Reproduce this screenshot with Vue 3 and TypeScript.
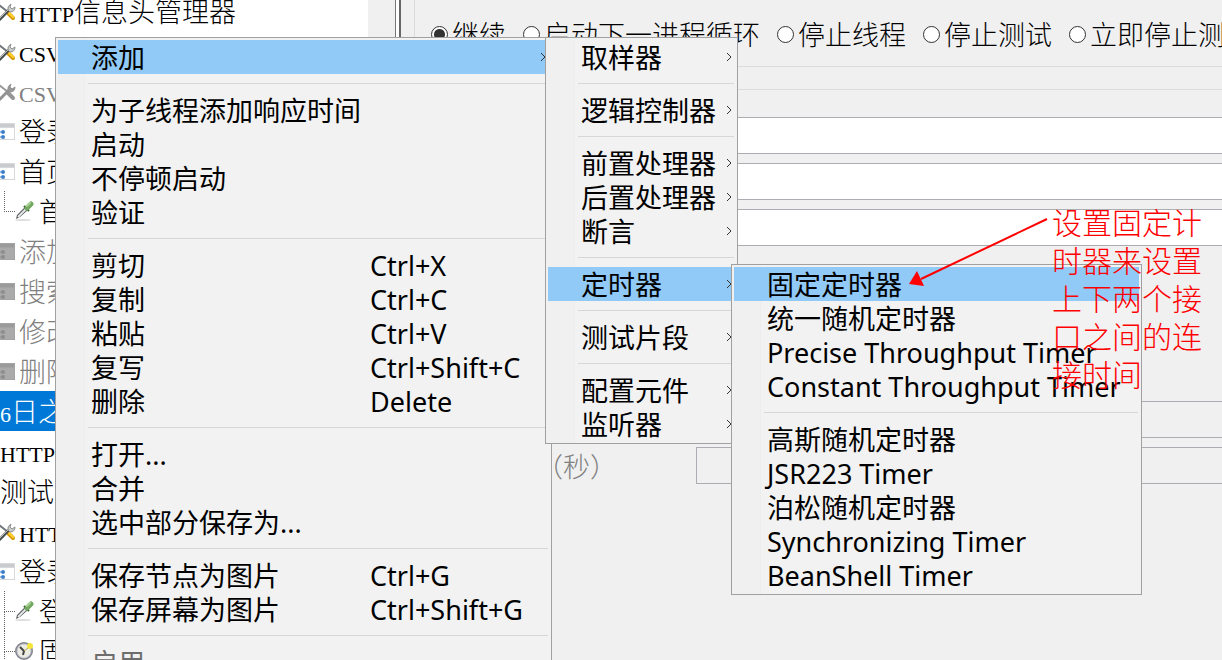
<script setup lang="ts">
type IconKind = 'tools' | 'tools-off' | 'http' | 'http-off' | 'dropper' | 'clock' | 'none'
interface TreeRow { latin?: string; text?: string; icon: IconKind; off?: boolean; child?: boolean; last?: boolean; selected?: boolean }
interface Entry { label?: string; keys?: string; sub?: boolean; active?: boolean; off?: boolean }

const rows: TreeRow[] = [
  { latin: 'HTTP', text: '信息头管理器', icon: 'tools' },
  { latin: 'CSV', icon: 'tools' },
  { latin: 'CSV', icon: 'tools-off', off: true },
  { text: '登录', icon: 'http' },
  { text: '首页', icon: 'http' },
  { text: '首', icon: 'dropper', child: true, last: true },
  { text: '添加', icon: 'http-off', off: true },
  { text: '搜索', icon: 'http-off', off: true },
  { text: '修改', icon: 'http-off', off: true },
  { text: '删除', icon: 'http-off', off: true },
  { latin: '6', text: '日之', icon: 'none', selected: true },
  { latin: 'HTTP', icon: 'none' },
  { text: '测试', icon: 'none' },
  { latin: 'HTTP', icon: 'tools' },
  { text: '登录', icon: 'http' },
  { text: '登', icon: 'dropper', child: true },
  { text: '固', icon: 'clock', child: true },
]

const actions = ['继续', '启动下一进程循环', '停止线程', '停止测试', '立即停止测试']

const sep: Entry = {}
const mainMenu: Entry[] = [
  { label: '添加', sub: true, active: true }, sep,
  { label: '为子线程添加响应时间' }, { label: '启动' }, { label: '不停顿启动' }, { label: '验证' }, sep,
  { label: '剪切', keys: 'Ctrl+X' }, { label: '复制', keys: 'Ctrl+C' }, { label: '粘贴', keys: 'Ctrl+V' },
  { label: '复写', keys: 'Ctrl+Shift+C' }, { label: '删除', keys: 'Delete' }, sep,
  { label: '打开...' }, { label: '合并' }, { label: '选中部分保存为...' }, sep,
  { label: '保存节点为图片', keys: 'Ctrl+G' }, { label: '保存屏幕为图片', keys: 'Ctrl+Shift+G' }, sep,
  { label: '启用', off: true },
]
const addMenu: Entry[] = [
  { label: '取样器', sub: true }, sep,
  { label: '逻辑控制器', sub: true }, sep,
  { label: '前置处理器', sub: true }, { label: '后置处理器', sub: true }, { label: '断言', sub: true }, sep,
  { label: '定时器', sub: true, active: true }, sep,
  { label: '测试片段', sub: true }, sep,
  { label: '配置元件', sub: true }, { label: '监听器', sub: true },
]
const timerMenu: Entry[] = [
  { label: '固定定时器', active: true }, { label: '统一随机定时器' },
  { label: 'Precise Throughput Timer' }, { label: 'Constant Throughput Timer' }, sep,
  { label: '高斯随机定时器' }, { label: 'JSR223 Timer' }, { label: '泊松随机定时器' },
  { label: 'Synchronizing Timer' }, { label: 'BeanShell Timer' },
]
const menus = [
  { name: 'main', entries: mainMenu },
  { name: 'add', entries: addMenu },
  { name: 'timer', entries: timerMenu },
]
const note = ['设置固定计', '时器来设置', '上下两个接', '口之间的连', '接时间']
</script>

<template>
  <div class="window">
    <nav class="tree" aria-label="测试计划">
      <div v-for="(r, i) in rows" :key="i" class="row" :class="{ off: r.off, child: r.child, last: r.last, selected: r.selected }">
        <svg v-if="r.icon === 'tools'" class="icon" viewBox="0 0 20 20" fill="none">
          <path d="M-1 4L8 11" stroke="#6f7478" stroke-width="2" />
          <path d="M8 12L13 17" stroke="#d79a00" stroke-width="4" stroke-linecap="round" />
          <path d="M8 11L13 16" stroke="#ffd02e" stroke-width="2" stroke-linecap="round" />
          <path d="M-1 19L9 9" stroke="#4a4e50" stroke-width="3" />
          <path d="M0 17L9 8" stroke="#b9bdbb" />
          <path d="M11 3Q7 5 8 9L10 11Q15 11 15 6L12 8L10 6Z" fill="#c9ccca" stroke="#8b8e8c" />
        </svg>
        <svg v-else-if="r.icon === 'tools-off'" class="icon" viewBox="0 0 20 20" fill="none">
          <path d="M-1 4L8 11" stroke="#989898" stroke-width="2" />
          <path d="M8 12L13 17" stroke="#969696" stroke-width="4" stroke-linecap="round" />
          <path d="M-1 19L9 9" stroke="#929292" stroke-width="3" />
          <path d="M11 3Q7 5 8 9L10 11Q15 11 15 6L12 8L10 6Z" fill="#999" stroke="#929292" />
        </svg>
        <svg v-else-if="r.icon === 'http' || r.icon === 'http-off'" class="icon" viewBox="0 0 20 20">
          <rect x="-8" y="2" width="23" height="17" :fill="r.icon === 'http' ? '#d6d8dc' : '#a3a3a3'" />
          <rect x="-8" y="7" width="22" height="11" :fill="r.icon === 'http' ? '#fff' : '#aaa'" />
          <rect x="-8" y="3" width="22" height="3" :fill="r.icon === 'http' ? '#c9cbce' : '#9b9b9b'" />
          <circle cx="3" cy="11" r="2" :fill="r.icon === 'http' ? '#3b7ec9' : '#8e8e8e'" />
          <circle cx="3" cy="16" r="2" :fill="r.icon === 'http' ? '#3b7ec9' : '#8e8e8e'" />
          <path d="M-1 11H1M-1 16H1" :stroke="r.icon === 'http' ? '#3b7ec9' : '#8e8e8e'" />
        </svg>
        <svg v-else-if="r.icon === 'dropper'" class="icon" viewBox="0 0 20 20">
          <ellipse cx="8" cy="19" rx="8" ry="1" fill="#ddd" />
          <path d="M1 18L2 14L10 6L13 9L5 16Z" fill="#565a5c" />
          <path d="M3 16L11 8" stroke="#e4e8e8" stroke-width="2" />
          <path d="M9 5L14 10" stroke="#355c30" stroke-width="2" />
          <path d="M12 7L16 3" stroke="#73a861" stroke-width="5" stroke-linecap="round" />
          <path d="M12 5L15 2" stroke="#a7d494" stroke-width="2" stroke-linecap="round" />
        </svg>
        <svg v-else-if="r.icon === 'clock'" class="icon" viewBox="0 0 20 20">
          <circle cx="9" cy="10" r="8" fill="#eeede4" stroke="#85868f" stroke-width="2" />
          <circle cx="9" cy="10" r="7" fill="none" stroke="#c3c4d4" />
          <path d="M5 6L9 10L8 14" fill="none" stroke="#444" stroke-width="2" />
          <path d="M9 10L13 7" stroke="#b7a24c" />
          <circle cx="15" cy="5" r="3" fill="#f5e43c" />
        </svg>
        <span><span v-if="r.latin" class="latin">{{ r.latin }}</span>{{ r.text }}</span>
      </div>
    </nav>

    <div class="gap"></div>
    <div class="divider"></div>

    <main class="panel">
      <fieldset class="group actions">
        <legend>取样器错误后执行的动作</legend>
        <label v-for="(a, i) in actions" :key="a" class="choice">
          <input type="radio" name="action" :checked="i === 0" />{{ a }}
        </label>
      </fieldset>
      <section class="group props">
        <input class="field" aria-label="线程数" />
        <input class="field" aria-label="Ramp-Up 时间" />
        <input class="field" aria-label="循环次数" />
        <div class="schedule">
          <input class="field" aria-label="持续时间" disabled />
          <label class="delay"><span>启动延迟（秒）</span><input class="field" disabled /></label>
        </div>
      </section>
    </main>

    <div v-for="m in menus" :key="m.name" class="menu" :class="m.name" role="menu">
      <template v-for="(e, i) in m.entries" :key="i">
        <button v-if="e.label" class="item" :class="{ active: e.active }" :disabled="e.off" role="menuitem">
          <span class="label">{{ e.label }}</span>
          <span v-if="e.keys" class="keys">{{ e.keys }}</span>
          <svg v-if="e.sub" class="chevron" viewBox="0 0 6 10"><path d="M1 1L5 5L1 9" fill="none" stroke="#333" /></svg>
        </button>
        <hr v-else />
      </template>
    </div>

    <svg class="arrow" viewBox="0 0 140 70">
      <path d="M138 2L12 62" stroke="#f00" stroke-width="2" />
      <path d="M0 67L8 54L15 69Z" fill="#f00" />
    </svg>
    <p class="note"><span v-for="line in note" :key="line">{{ line }}</span></p>
  </div>
</template>

<style>
html, body, #app { height: 100%; }
body { margin: 0; overflow: hidden; background: #f0f0f0; }
</style>

<style scoped>
.window {
  position: relative;
  display: flex;
  height: 100%;
  overflow: hidden;
  color: #000;
  font: 27px/34px "Noto Sans CJK SC", sans-serif;
}
.tree { flex: 0 0 368px; background: #fff; margin-top: -9px; }
.row {
  position: relative;
  display: flex;
  align-items: center;
  height: 40px;
  white-space: nowrap;
  font-weight: 300;
}
.row.off { color: #808080; }
.row.selected { background: #0078d7; color: #fff; }
.row.child { padding-left: 15px; }
.row.child::before {
  content: "";
  position: absolute;
  left: 4px;
  top: 0;
  width: 10px;
  height: 20px;
  border-left: 1px dotted #666;
  border-bottom: 1px dotted #666;
}
.row.child:not(.last)::after {
  content: "";
  position: absolute;
  left: 4px;
  top: 20px;
  height: 20px;
  border-left: 1px dotted #666;
}
.icon { flex: none; width: 20px; height: 20px; margin-right: -1px; }
.row.child .icon { margin-right: 4px; }
.latin { font-family: "Liberation Serif", serif; font-size: 22px; line-height: 1; }
.gap { flex: 0 0 27px; }
.divider { flex: 0 0 3px; border-left: 1px solid #777; border-right: 2px solid #666; background: #fff; }
.panel { flex: 1; min-width: 0; padding-left: 13px; font-weight: 300; }
.group { margin: 0; border: 1px solid #dcdcdc; border-right: 0; }
.actions {
  position: relative;
  display: flex;
  gap: 17px;
  height: 67px;
  box-sizing: border-box;
  border-top: 0;
  padding: 17px 0 0 16px;
  min-width: 0;
}
.actions legend { position: absolute; top: -27px; left: 57px; padding: 0; line-height: 26px; }
.choice { display: flex; flex: none; align-items: center; gap: 4px; height: 34px; white-space: nowrap; }
.choice input {
  appearance: none;
  width: 17px;
  height: 17px;
  margin: 0;
  border: 1px solid #333;
  border-radius: 50%;
  background: #fff;
}
.choice input:checked { background: radial-gradient(circle, #333 5px, #fff 6px); }
.props { display: flex; flex-direction: column; gap: 9px; margin-top: 22px; margin-right: -2px; padding-top: 27px; }
.field {
  display: block;
  box-sizing: border-box;
  width: 100%;
  height: 37px;
  border: 1px solid #abadb3;
  background: #fff;
  font: inherit;
}
.field:disabled { background: #f0f0f0; }
.schedule { display: flex; flex-direction: column; gap: 9px; margin-top: 146px; padding-bottom: 240px; }
.delay { display: flex; align-items: center; color: #808080; }
.delay span { flex: 0 0 281px; padding-left: 13px; box-sizing: border-box; white-space: nowrap; }
.menu {
  position: absolute;
  box-sizing: border-box;
  padding: 2px;
  border: 1px solid #a0a0a0;
  background: linear-gradient(90deg, #f0f0f0 28px, #ededed 28px, #ededed 29px, #f2f2f2 29px);
  font-family: "Noto Sans", "Noto Sans CJK SC", sans-serif;
}
.main { left: 55px; top: 37px; width: 497px; }
.add { left: 545px; top: 37px; width: 193px; }
.timer { left: 731px; top: 264px; width: 411px; }
.item {
  display: flex;
  align-items: center;
  width: 100%;
  height: 34px;
  padding: 2px 0 0 33px;
  border: 0;
  background: none;
  color: #000;
  font: inherit;
  text-align: left;
  white-space: nowrap;
}
.item.active { background: #91c9f7; }
.item:disabled { color: #6d6d6d; }
.main .label { flex: 0 0 279px; }
.chevron { width: 6px; height: 10px; margin: 0 3px 2px auto; }
hr { height: 1px; margin: 9px 1px 9px 30px; border: 0; background: #d7d7d7; }
.arrow { position: absolute; left: 909px; top: 217px; width: 140px; height: 70px; }
.note {
  position: absolute;
  left: 1052px;
  top: 202px;
  margin: 0;
  color: #f00;
  font-size: 30px;
  font-weight: 300;
  line-height: 38px;
}
.note span { display: block; white-space: nowrap; }
</style>
